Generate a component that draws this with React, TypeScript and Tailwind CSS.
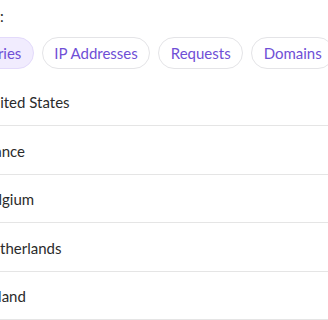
import React, { useState } from 'react';

const tabs = ['Countries', 'IP Addresses', 'Requests', 'Domains'];
const countries = ['United States', 'France', 'Belgium', 'Netherlands', 'Poland'];

const App: React.FC = () => {
  const [active, setActive] = useState(0);

  return (
    <div className="w-[328px] h-[320px] overflow-hidden bg-white font-['Lato',sans-serif]">
      <div className="pt-[6px] -ml-[19px] w-[400px]">
        <div className="h-5 text-[15px] leading-5 text-[#2b2b2b] -ml-[42px]">Group by:</div>

        <div className="mt-[11px] -ml-[36px] flex gap-2 whitespace-nowrap">
          {tabs.map((tab, index) => (
            <button
              key={tab}
              onClick={() => setActive(index)}
              className={`h-8 px-[11.5px] rounded-full border text-[15px] text-[#6f4fd6] ${
                index === active
                  ? 'bg-[#f1ecfe] border-[#e3dafb]'
                  : 'bg-white border-[#e4e4e7]'
              }`}
            >
              {tab}
            </button>
          ))}
        </div>

        <ul className="mt-[9px] w-[347px]">
          {countries.map((name) => (
            <li
              key={name}
              className="h-[48.4px] flex items-center border-b border-[#e5e5e5] text-[15px] text-[#2b2b2b] pt-[2px]"
            >
              {name}
            </li>
          ))}
        </ul>
      </div>
    </div>
  );
};

export default App;
